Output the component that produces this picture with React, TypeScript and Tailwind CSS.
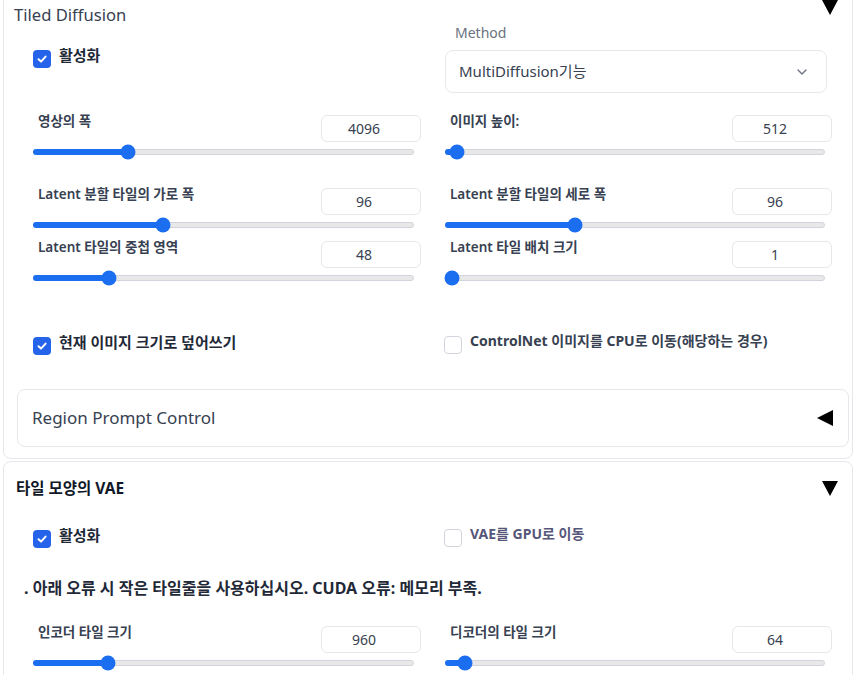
import React from "react";
import { ChevronDown } from "lucide-react";

function Check({ checked }: { checked: boolean }) {
  if (checked) {
    return (
      <div className="flex h-[18px] w-[18px] shrink-0 items-center justify-center rounded-[4px] bg-[#2563eb]">
        <svg width="12" height="12" viewBox="0 0 12 12" fill="none">
          <path d="M2.5 6.3 L5 8.6 L9.6 3.6" stroke="white" strokeWidth="2" strokeLinecap="round" strokeLinejoin="round" />
        </svg>
      </div>
    );
  }
  return <div className="h-[18px] w-[18px] shrink-0 rounded-[4px] border border-[#d1d5db] bg-white" />;
}

function CheckRow({ checked, label, color = "text-[#1f2937]", size = "text-[15px]" }: { checked: boolean; label: string; color?: string; size?: string }) {
  return (
    <div className="flex items-start gap-[8px]">
      <Check checked={checked} />
      <span className={`mt-[-5px] ${size} font-bold leading-[20px] ${color}`}>{label}</span>
    </div>
  );
}

function Slider({ label, value, pos }: { label: string; value: string; pos: number }) {
  return (
    <div>
      <div className="flex h-[27px] items-start justify-between">
        <span className="mt-[-3px] pl-[5px] text-[13.5px] font-semibold leading-[18px] text-[#374151]">{label}</span>
        <div className="flex h-[27px] w-[100px] items-center justify-center rounded-md border border-[#e5e7eb] bg-white pr-[14px] text-[14px] text-[#374151]">
          {value}
        </div>
      </div>
      <div className="relative mr-[7px] mt-[7px] h-[6px] rounded-full border border-[#d1d5db] bg-[#e8e8e8]">
        <div className="absolute left-[-1px] top-[-1px] h-[6px] rounded-full bg-[#1c6ef0]" style={{ width: pos }} />
        <div
          className="absolute top-1/2 h-[15px] w-[15px] -translate-x-1/2 -translate-y-1/2 rounded-full bg-[#1c6ef0]"
          style={{ left: pos }}
        />
      </div>
    </div>
  );
}

function TriDown() {
  return (
    <svg width="16" height="15" viewBox="0 0 16 15">
      <polygon points="0,0 16,0 8,15" fill="#000" />
    </svg>
  );
}

export default function App() {
  return (
    <div className="min-h-[675px] overflow-hidden bg-white font-['Noto_Sans','Noto_Sans_CJK_KR',sans-serif]">
      {/* Panel 1 */}
      <div className="ml-[3px] mt-[-10px] w-[850px] rounded-lg border border-[#e5e7eb] pb-[11px]">
        <div className="flex items-start justify-between pl-[10px] pr-[14px] pt-[16px]">
          <span className="text-[16.6px] leading-[16px] text-[#374151]">Tiled Diffusion</span>
          <div className="mt-[-7px]">
            <TriDown />
          </div>
        </div>

        <div className="ml-[29px] grid w-[799px] grid-cols-[388px_387px] gap-x-[24px]">
          <div className="pt-[27px]">
            <CheckRow checked label="활성화" />
          </div>
          <div>
            <div className="pl-[10px] text-[14px] leading-[20px] text-[#6b7280]">Method</div>
            <div className="mr-[5px] mt-[7px] flex h-[43px] items-center justify-between rounded-lg border border-[#e5e7eb] pl-[13px] pr-[16px]">
              <span className="text-[15px] text-[#374151]">MultiDiffusion기능</span>
              <ChevronDown size={16} className="text-[#6b7280]" />
            </div>
          </div>
        </div>

        <div className="ml-[29px] mt-[22px] grid w-[799px] grid-cols-[388px_387px] gap-x-[24px]">
          <Slider label="영상의 폭" value="4096" pos={94} />
          <Slider label="이미지 높이:" value="512" pos={11} />
        </div>
        <div className="ml-[29px] mt-[33px] grid w-[799px] grid-cols-[388px_387px] gap-x-[24px]">
          <Slider label="Latent 분할 타일의 가로 폭" value="96" pos={129} />
          <Slider label="Latent 분할 타일의 세로 폭" value="96" pos={129} />
        </div>
        <div className="ml-[29px] mt-[13px] grid w-[799px] grid-cols-[388px_387px] gap-x-[24px]">
          <Slider label="Latent 타일의 중첩 영역" value="48" pos={75} />
          <Slider label="Latent 타일 배치 크기" value="1" pos={6} />
        </div>

        <div className="ml-[29px] mt-[56px] grid w-[799px] grid-cols-[388px_387px] gap-x-[24px]">
          <CheckRow checked label="현재 이미지 크기로 덮어쓰기" />
          <div className="ml-[-1px] mt-[-1px]">
            <CheckRow checked={false} label="ControlNet 이미지를 CPU로 이동(해당하는 경우)" color="text-[#374151]" size="text-[14px]" />
          </div>
        </div>

        <div className="ml-[13px] mt-[34px] flex h-[58px] w-[832px] items-center justify-between rounded-lg border border-[#e5e7eb] pl-[14px] pr-[15px]">
          <span className="text-[17px] text-[#374151]">Region Prompt Control</span>
          <svg width="16" height="16" viewBox="0 0 16 16">
            <polygon points="16,0 16,16 0,8" fill="#000" />
          </svg>
        </div>
      </div>

      {/* Panel 2 */}
      <div className="ml-[3px] mt-[2px] h-[260px] w-[850px] rounded-lg border border-[#e5e7eb]">
        <div className="flex items-center justify-between pl-[12px] pr-[14px] pt-[16px]">
          <span className="text-[15.5px] font-bold leading-[20px] text-[#111827]">타일 모양의 VAE</span>
          <TriDown />
        </div>

        <div className="ml-[29px] mt-[32px] grid w-[799px] grid-cols-[388px_387px] gap-x-[24px]">
          <CheckRow checked label="활성화" />
          <div className="ml-[-1px] mt-[-1px]">
            <CheckRow checked={false} label="VAE를 GPU로 이동" color="text-[#56567a]" size="text-[14px]" />
          </div>
        </div>

        <div className="mt-[30px] pl-[20px] text-[16px] font-bold leading-[20px] text-[#1f2937]">
          . 아래 오류 시 작은 타일줄을 사용하십시오. CUDA 오류: 메모리 부족.
        </div>

        <div className="ml-[29px] mt-[28px] grid w-[799px] grid-cols-[388px_387px] gap-x-[24px]">
          <Slider label="인코더 타일 크기" value="960" pos={74} />
          <Slider label="디코더의 타일 크기" value="64" pos={19} />
        </div>
      </div>
    </div>
  );
}
